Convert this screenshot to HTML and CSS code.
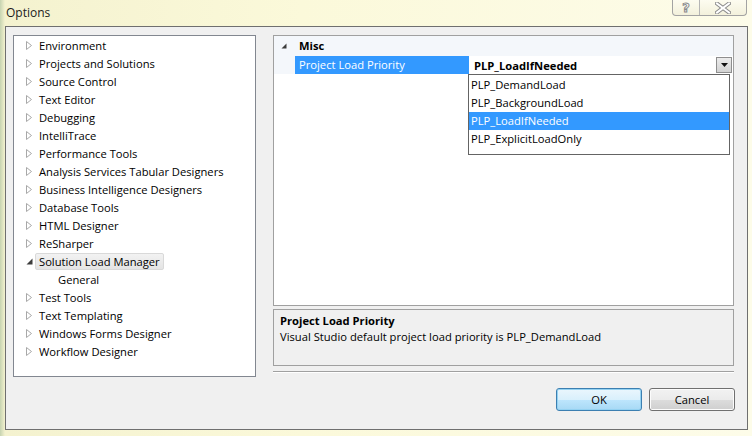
FILE: index.html
```html
<!DOCTYPE html>
<html lang="en">
<head>
    <meta charset="UTF-8">
    <title>Options</title>
    <link rel="stylesheet" href="styles.css">
</head>
<body>
    <div class="window">
        <div class="titlebar">
            <span class="title">Options</span>
            <div class="caption-btns">
                <span class="cap help">?</span>
                <span class="cap close">
                    <svg width="16" height="12" viewBox="0 0 16 12">
                        <path d="M2 1.5 L14 10.5 M14 1.5 L2 10.5" stroke="#8a8a8a" stroke-width="4" stroke-linecap="square"/>
                        <path d="M2 1.5 L14 10.5 M14 1.5 L2 10.5" stroke="#ffffff" stroke-width="2" stroke-linecap="square"/>
                    </svg>
                </span>
            </div>
        </div>

        <div class="client">
            <div class="main">
                <ul class="tree">
                    <li><span class="arrow"><svg width="6" height="9"><path d="M0.5 0.5 L5.5 4.5 L0.5 8.5 Z" fill="#fff" stroke="#a8a8a8"/></svg></span><span class="label">Environment</span></li>
                    <li><span class="arrow"><svg width="6" height="9"><path d="M0.5 0.5 L5.5 4.5 L0.5 8.5 Z" fill="#fff" stroke="#a8a8a8"/></svg></span><span class="label">Projects and Solutions</span></li>
                    <li><span class="arrow"><svg width="6" height="9"><path d="M0.5 0.5 L5.5 4.5 L0.5 8.5 Z" fill="#fff" stroke="#a8a8a8"/></svg></span><span class="label">Source Control</span></li>
                    <li><span class="arrow"><svg width="6" height="9"><path d="M0.5 0.5 L5.5 4.5 L0.5 8.5 Z" fill="#fff" stroke="#a8a8a8"/></svg></span><span class="label">Text Editor</span></li>
                    <li><span class="arrow"><svg width="6" height="9"><path d="M0.5 0.5 L5.5 4.5 L0.5 8.5 Z" fill="#fff" stroke="#a8a8a8"/></svg></span><span class="label">Debugging</span></li>
                    <li><span class="arrow"><svg width="6" height="9"><path d="M0.5 0.5 L5.5 4.5 L0.5 8.5 Z" fill="#fff" stroke="#a8a8a8"/></svg></span><span class="label">IntelliTrace</span></li>
                    <li><span class="arrow"><svg width="6" height="9"><path d="M0.5 0.5 L5.5 4.5 L0.5 8.5 Z" fill="#fff" stroke="#a8a8a8"/></svg></span><span class="label">Performance Tools</span></li>
                    <li><span class="arrow"><svg width="6" height="9"><path d="M0.5 0.5 L5.5 4.5 L0.5 8.5 Z" fill="#fff" stroke="#a8a8a8"/></svg></span><span class="label">Analysis Services Tabular Designers</span></li>
                    <li><span class="arrow"><svg width="6" height="9"><path d="M0.5 0.5 L5.5 4.5 L0.5 8.5 Z" fill="#fff" stroke="#a8a8a8"/></svg></span><span class="label">Business Intelligence Designers</span></li>
                    <li><span class="arrow"><svg width="6" height="9"><path d="M0.5 0.5 L5.5 4.5 L0.5 8.5 Z" fill="#fff" stroke="#a8a8a8"/></svg></span><span class="label">Database Tools</span></li>
                    <li><span class="arrow"><svg width="6" height="9"><path d="M0.5 0.5 L5.5 4.5 L0.5 8.5 Z" fill="#fff" stroke="#a8a8a8"/></svg></span><span class="label">HTML Designer</span></li>
                    <li><span class="arrow"><svg width="6" height="9"><path d="M0.5 0.5 L5.5 4.5 L0.5 8.5 Z" fill="#fff" stroke="#a8a8a8"/></svg></span><span class="label">ReSharper</span></li>
                    <li><span class="arrow"><svg width="7" height="7"><path d="M6.5 0.5 L6.5 6.5 L0.5 6.5 Z" fill="#3c3c3c"/></svg></span><span class="label selected">Solution Load Manager</span></li>
                    <li class="child"><span class="label">General</span></li>
                    <li><span class="arrow"><svg width="6" height="9"><path d="M0.5 0.5 L5.5 4.5 L0.5 8.5 Z" fill="#fff" stroke="#a8a8a8"/></svg></span><span class="label">Test Tools</span></li>
                    <li><span class="arrow"><svg width="6" height="9"><path d="M0.5 0.5 L5.5 4.5 L0.5 8.5 Z" fill="#fff" stroke="#a8a8a8"/></svg></span><span class="label">Text Templating</span></li>
                    <li><span class="arrow"><svg width="6" height="9"><path d="M0.5 0.5 L5.5 4.5 L0.5 8.5 Z" fill="#fff" stroke="#a8a8a8"/></svg></span><span class="label">Windows Forms Designer</span></li>
                    <li><span class="arrow"><svg width="6" height="9"><path d="M0.5 0.5 L5.5 4.5 L0.5 8.5 Z" fill="#fff" stroke="#a8a8a8"/></svg></span><span class="label">Workflow Designer</span></li>
                </ul>

                <div class="right">
                    <div class="grid">
                        <div class="cat-row">
                            <span class="cat-arrow"><svg width="6" height="6"><path d="M5.5 0.5 L5.5 5.5 L0.5 5.5 Z" fill="#3c3c3c"/></svg></span>
                            <span class="cat-name">Misc</span>
                        </div>
                        <div class="prop-row">
                            <span class="prop-gutter"></span>
                            <span class="prop-name">Project Load Priority</span>
                            <span class="prop-value">PLP_LoadIfNeeded</span>
                            <span class="drop-btn"><svg width="7" height="4"><path d="M0 0 L7 0 L3.5 4 Z" fill="#111"/></svg></span>
                        </div>
                        <ul class="drop-list">
                            <li>PLP_DemandLoad</li>
                            <li>PLP_BackgroundLoad</li>
                            <li class="active">PLP_LoadIfNeeded</li>
                            <li>PLP_ExplicitLoadOnly</li>
                        </ul>
                    </div>

                    <div class="desc">
                        <div class="desc-title">Project Load Priority</div>
                        <div class="desc-text">Visual Studio default project load priority is PLP_DemandLoad</div>
                    </div>

                    <div class="sep"></div>

                    <div class="buttons">
                        <button class="btn btn-default">OK</button>
                        <button class="btn">Cancel</button>
                    </div>
                </div>
            </div>
        </div>
    </div>
</body>
</html>
```

FILE: styles.css
```css
body {
    margin: 0;
    font-family: "Open Sans", "Noto Sans", sans-serif;
    font-size: 11.2px;
    color: #000;
    background-color: #fbf9de;
}

.window {
    width: 752px;
    height: 436px;
    display: flex;
    flex-direction: column;
    background: linear-gradient(to right, #c6d3b0 0px, #f4f2cf 5px, #fbf9da 40%, #fdfce9 100%);
    overflow: hidden;
}

.titlebar {
    height: 26px;
    display: flex;
    align-items: flex-start;
    justify-content: space-between;
}

.title {
    font-size: 12px;
    color: #1b1b1b;
    padding: 4px 0 0 6px;
}

.caption-btns {
    display: flex;
    margin-right: 5px;
    border: 1px solid #a3a3a3;
    border-top: none;
    border-radius: 0 0 4px 4px;
    background: linear-gradient(#fdfcf0, #f3f1dc);
    height: 15px;
}

.cap {
    display: flex;
    align-items: center;
    justify-content: center;
    height: 15px;
}

.help {
    width: 26px;
    border-right: 1px solid #b5b5b5;
    font-family: "DejaVu Sans", sans-serif;
    font-weight: bold;
    font-size: 13px;
    color: #fff;
    -webkit-text-stroke: 1px #8a8a8a;
}

.close {
    width: 46px;
}

.client {
    flex: 1;
    margin: 0 4px 6px 5px;
    border: 1px solid #6f6f6f;
    background-color: #f0f0f0;
}

.main {
    display: flex;
    align-items: flex-start;
    padding: 8px 0 0 7px;
}

/* left options tree */
.tree {
    list-style: none;
    margin: 0;
    padding: 0;
    width: 241px;
    height: 340px;
    border: 1px solid #828790;
    background-color: #fff;
}

.tree li {
    height: 18px;
    display: flex;
    align-items: center;
    padding-left: 12px;
    white-space: nowrap;
}

.tree li.child {
    padding-left: 41px;
}

.arrow {
    width: 10px;
    display: flex;
    align-items: center;
}

.label {
    padding: 0 3px;
    line-height: 15px;
    border: 1px solid transparent;
    margin-left: -1px;
}

.label.selected {
    background: linear-gradient(#f2f2f2, #e4e4e4);
    border-color: #d9d9d9;
    border-radius: 2px;
}

/* right side */
.right {
    margin-left: 17px;
    width: 461px;
}

.grid {
    position: relative;
    height: 269px;
    border: 1px solid #a0a0a0;
    background-color: #fff;
}

.cat-row {
    height: 20px;
    display: flex;
    align-items: center;
    background-color: #f4f7fb;
    padding-left: 7px;
    padding-bottom: 1px;
    box-sizing: border-box;
}

.cat-arrow {
    width: 18px;
    display: flex;
}

.cat-name {
    font-weight: bold;
}

.prop-row {
    height: 18px;
    display: flex;
    align-items: center;
}

.prop-gutter {
    width: 21px;
    height: 18px;
    background-color: #f4f7fb;
}

.prop-name {
    width: 170px;
    height: 18px;
    line-height: 18px;
    padding-left: 4px;
    background-color: #3399ff;
    color: #fff;
}

.prop-value {
    flex: 1;
    padding-left: 5px;
    font-weight: bold;
}

.drop-btn {
    width: 14px;
    height: 14px;
    margin: 0 1px 0 0;
    border: 1px solid #8e8e8e;
    background: linear-gradient(#ececec, #d2d2d2);
    display: flex;
    align-items: center;
    justify-content: center;
}

.drop-list {
    position: absolute;
    left: 194px;
    top: 38px;
    width: 260px;
    height: 75px;
    margin: 0;
    padding: 1px 0 3px 0;
    list-style: none;
    border: 1px solid #646464;
    background-color: #fff;
}

.drop-list li {
    height: 18px;
    line-height: 18px;
    padding-left: 2px;
}

.drop-list li.active {
    background-color: #3399ff;
    color: #fff;
}

.desc {
    margin-top: 3px;
    height: 50px;
    border: 1px solid #a0a0a0;
    padding: 3px 0 2px 6px;
    line-height: 16px;
}

.desc-title {
    font-weight: bold;
}

.sep {
    margin-top: 5px;
    height: 1px;
    background-color: #a0a0a0;
    border-bottom: 1px solid #fff;
}

.buttons {
    display: flex;
    justify-content: flex-end;
    gap: 7px;
    margin: 15px -1px 0 0;
}

.btn {
    width: 86px;
    height: 23px;
    font-family: "Open Sans", "Noto Sans", sans-serif;
    font-size: 11.2px;
    color: #000;
    border: 1px solid #707070;
    border-radius: 3px;
    background: linear-gradient(#f2f2f2 0%, #ebebeb 50%, #dddddd 50%, #cfcfcf 100%);
    box-shadow: inset 0 0 0 1px #fcfcfc;
    padding: 0;
}

.btn-default {
    border-color: #3c7fb1;
    background: linear-gradient(#eaf6fd 0%, #d9f0fc 50%, #bee6fd 50%, #a7d9f5 100%);
    box-shadow: inset 0 0 0 1px #94d2f2;
}
```
